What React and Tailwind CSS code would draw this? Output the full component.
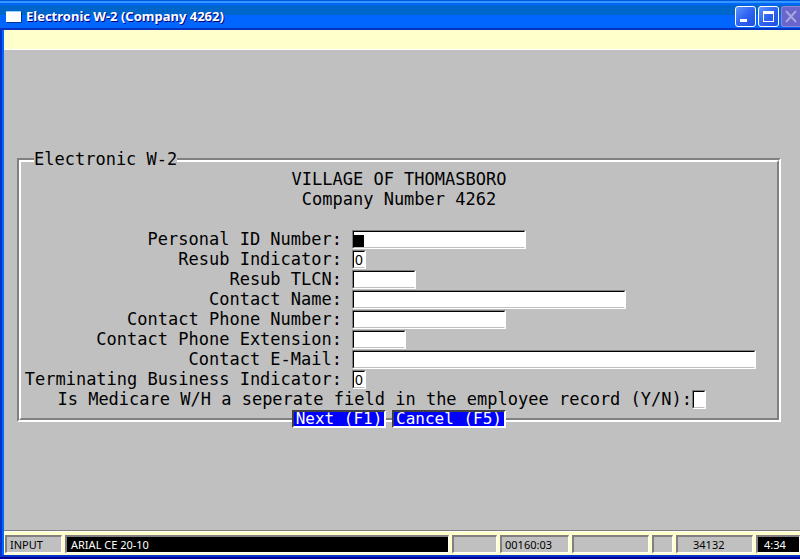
import React from "react";

const FIELDS = [
  { id: "pin", label: "Personal ID Number:", width: "w-[174px]", cursor: true },
  { id: "resub", label: "Resub Indicator:", width: "w-[14px]", value: "0" },
  { id: "tlcn", label: "Resub TLCN:", width: "w-[64px]" },
  { id: "name", label: "Contact Name:", width: "w-[274px]" },
  { id: "phone", label: "Contact Phone Number:", width: "w-[154px]" },
  { id: "ext", label: "Contact Phone Extension:", width: "w-[54px]" },
  { id: "email", label: "Contact E-Mail:", width: "w-[404px]" },
  { id: "term", label: "Terminating Business Indicator:", width: "w-[14px]", value: "0" },
];

function Field({ id, width, value = "", cursor = false }) {
  return (
    <span className={`relative block h-[19px] shrink-0 border border-t-[#808080] border-l-[#808080] border-r-white border-b-white ${width}`}>
      <input
        id={id}
        defaultValue={value}
        className="block h-[17px] w-full rounded-none border border-t-black border-l-black border-r-white border-b-[#c0c0c0] bg-white px-px font-['Liberation_Sans',sans-serif] text-[14px] leading-[14px] outline-none"
      />
      {cursor && <span className="absolute top-1 left-px h-3 w-[10px] bg-black" />}
    </span>
  );
}

function ActionButton({ children, width }) {
  return (
    <button
      type="button"
      className={`flex h-[18px] items-center justify-center border-2 border-t-[#404040] border-l-[#404040] border-r-white border-b-white bg-[#0000ff] text-[16px] leading-[14px] whitespace-nowrap text-white ${width}`}
    >
      {children}
    </button>
  );
}

function StatusCell({ children, className }) {
  return (
    <div className={`h-[18px] border-t-2 border-l-2 border-r border-b border-t-[#808080] border-l-[#808080] border-r-white border-b-white text-[11px] leading-[15px] whitespace-nowrap ${className}`}>
      {children}
    </div>
  );
}

function TitleBar() {
  const control =
    "flex h-[21px] w-[21px] items-center justify-center rounded-[3px] border border-white bg-linear-to-br from-[#5c94ff] via-[#2f62f0] to-[#1f50e0]";
  return (
    <header className="flex h-[30px] items-center border-b-2 border-[#0831c0] bg-[linear-gradient(#0055dd_0_1px,#3399ff_1px_3px,#0066ff_3px_5px,#0066cc_5px_15px,#0066ff_15px)] pt-1 pl-[6px]">
      <svg width="16" height="13" viewBox="0 0 16 13" aria-hidden="true">
        <path d="M1 12.5H15.5V2" fill="none" stroke="#003399" />
        <rect x="0" y="1" width="15" height="11" fill="#fff" />
        <path d="M0 1.5H15" stroke="#99ccff" />
      </svg>
      <h1 className="ml-1 flex-1 font-['Noto_Sans','Open_Sans',sans-serif] text-[13px] leading-5 font-bold whitespace-nowrap text-white [text-shadow:1px_1px_0_#00007a]">
        Electronic W-2 (Company 4262)
      </h1>
      <div className="flex gap-[2px]">
        <button type="button" aria-label="Minimize" className={control}>
          <svg width="19" height="19" viewBox="0 0 19 19"><path d="M4 12h7v3H4z" fill="#fff" /></svg>
        </button>
        <button type="button" aria-label="Maximize" className={control}>
          <svg width="19" height="19" viewBox="0 0 19 19">
            <path d="M4 4h11v11H4zM5 7v7h9V7z" fill="#fff" fillRule="evenodd" />
          </svg>
        </button>
        <button type="button" aria-label="Close" disabled className="flex h-[21px] w-[19px] items-center justify-center rounded-l-[3px] border border-r-0 border-[#8f86d0] bg-[#6865cc]">
          <svg width="18" height="19" viewBox="0 0 18 19">
            <path d="M4 4l10 11M14 4L4 15" stroke="#a9a5dd" strokeWidth="2" />
          </svg>
        </button>
      </div>
    </header>
  );
}

export default function App() {
  return (
    <div className="flex min-h-screen flex-col bg-[#0033cc]">
      <TitleBar />
      <div className="flex flex-1 flex-col border-l-2 border-[#0033cc]">
        <div className="flex flex-1 flex-col border-l-2 border-[#0066ff] bg-[#c0c0c0]">
          <div className="h-5 border-b border-white bg-[#ffffcc]" />

          <main className="flex-1 pt-[108px] pr-[19px] pl-[13px] font-['DejaVu_Sans_Mono',monospace] text-[17px] leading-[18px] text-black">
            <form onSubmit={(e) => e.preventDefault()}>
              <fieldset className="relative border-2 border-t-[#808080] border-l-[#808080] border-r-white border-b-white">
                <legend className="absolute -top-[10px] left-[15px] bg-[#c0c0c0] whitespace-nowrap">
                  Electronic W-2
                </legend>
                <div className="border-2 border-t-white border-l-white border-r-[#808080] border-b-[#808080] py-2">
                  <div className="mb-5 text-center">
                    <p className="h-5">VILLAGE OF THOMASBORO</p>
                    <p className="h-5">Company Number 4262</p>
                  </div>
                  {FIELDS.map(({ label, ...field }) => (
                    <div key={field.id} className="flex h-5 items-start gap-[10px]">
                      <label htmlFor={field.id} className="flex w-[321px] shrink-0 justify-end whitespace-nowrap">
                        {label}
                      </label>
                      <Field {...field} />
                    </div>
                  ))}
                  <div className="flex h-5 items-start">
                    <label htmlFor="medicare" className="flex w-[671px] shrink-0 justify-end whitespace-nowrap">
                      Is Medicare W/H a seperate field in the employee record (Y/N):
                    </label>
                    <Field id="medicare" width="w-[14px]" />
                  </div>
                </div>
              </fieldset>
              <div className="relative -mt-3 flex justify-center gap-[6px]">
                <ActionButton width="w-[94px]">Next (F1)</ActionButton>
                <ActionButton width="w-[114px]">Cancel (F5)</ActionButton>
              </div>
            </form>
          </main>

          <footer className="flex gap-[3px] border-t border-[#808080] bg-[#ffffcc] pb-[2px] pl-px font-['Noto_Sans',sans-serif] text-black shadow-[inset_0_1px_0_#fff] pt-1">
            <StatusCell className="w-[57px] bg-[#c0c0c0] pl-[3px]">INPUT</StatusCell>
            <StatusCell className="flex-1 bg-black pl-1 text-white">ARIAL CE 20-10</StatusCell>
            <StatusCell className="w-[45px] bg-[#c0c0c0]" />
            <StatusCell className="w-[69px] bg-[#c0c0c0] pl-[3px]">00160:03</StatusCell>
            <StatusCell className="w-[77px] bg-[#c0c0c0]" />
            <StatusCell className="w-[21px] bg-[#c0c0c0]" />
            <StatusCell className="w-[77px] bg-[#c0c0c0] pr-3 pl-[15px]">34132</StatusCell>
            <StatusCell className="w-11 bg-black pl-[6px] text-white">4:34</StatusCell>
          </footer>
        </div>
      </div>
      <div className="h-1 border-b-2 border-[#000099] bg-[#0033cc]" />
    </div>
  );
}
